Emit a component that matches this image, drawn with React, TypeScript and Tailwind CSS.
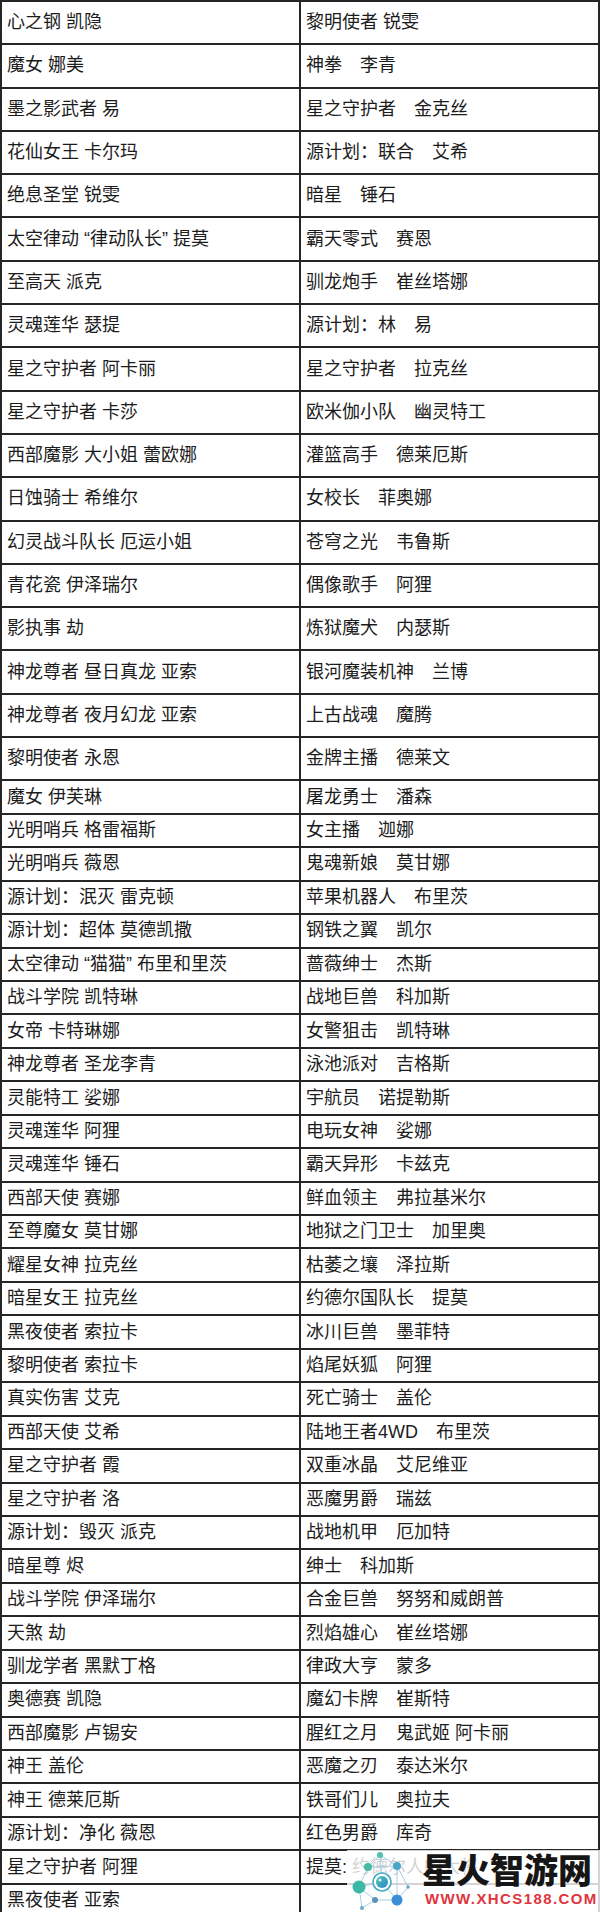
import { clsx } from "clsx";

// 左列 / 右列 皮肤名，顺序与截图一致
const rows: [string, string][] = [
  ["心之钢 凯隐", "黎明使者 锐雯"],
  ["魔女 娜美", "神拳　李青"],
  ["墨之影武者 易", "星之守护者　金克丝"],
  ["花仙女王 卡尔玛", "源计划：联合　艾希"],
  ["绝息圣堂 锐雯", "暗星　锤石"],
  ["太空律动 “律动队长” 提莫", "霸天零式　赛恩"],
  ["至高天 派克", "驯龙炮手　崔丝塔娜"],
  ["灵魂莲华 瑟提", "源计划：林　易"],
  ["星之守护者 阿卡丽", "星之守护者　拉克丝"],
  ["星之守护者 卡莎", "欧米伽小队　幽灵特工"],
  ["西部魔影 大小姐 蕾欧娜", "灌篮高手　德莱厄斯"],
  ["日蚀骑士 希维尔", "女校长　菲奥娜"],
  ["幻灵战斗队长 厄运小姐", "苍穹之光　韦鲁斯"],
  ["青花瓷 伊泽瑞尔", "偶像歌手　阿狸"],
  ["影执事 劫", "炼狱魔犬　内瑟斯"],
  ["神龙尊者 昼日真龙 亚索", "银河魔装机神　兰博"],
  ["神龙尊者 夜月幻龙 亚索", "上古战魂　魔腾"],
  ["黎明使者 永恩", "金牌主播　德莱文"],
  ["魔女 伊芙琳", "屠龙勇士　潘森"],
  ["光明哨兵 格雷福斯", "女主播　迦娜"],
  ["光明哨兵 薇恩", "鬼魂新娘　莫甘娜"],
  ["源计划：泯灭 雷克顿", "苹果机器人　布里茨"],
  ["源计划：超体 莫德凯撒", "钢铁之翼　凯尔"],
  ["太空律动 “猫猫” 布里和里茨", "蔷薇绅士　杰斯"],
  ["战斗学院 凯特琳", "战地巨兽　科加斯"],
  ["女帝 卡特琳娜", "女警狙击　凯特琳"],
  ["神龙尊者 圣龙李青", "泳池派对　吉格斯"],
  ["灵能特工 娑娜", "宇航员　诺提勒斯"],
  ["灵魂莲华 阿狸", "电玩女神　娑娜"],
  ["灵魂莲华 锤石", "霸天异形　卡兹克"],
  ["西部天使 赛娜", "鲜血领主　弗拉基米尔"],
  ["至尊魔女 莫甘娜", "地狱之门卫士　加里奥"],
  ["耀星女神 拉克丝", "枯萎之壤　泽拉斯"],
  ["暗星女王 拉克丝", "约德尔国队长　提莫"],
  ["黑夜使者 索拉卡", "冰川巨兽　墨菲特"],
  ["黎明使者 索拉卡", "焰尾妖狐　阿狸"],
  ["真实伤害 艾克", "死亡骑士　盖伦"],
  ["西部天使 艾希", "陆地王者4WD　布里茨"],
  ["星之守护者 霞", "双重冰晶　艾尼维亚"],
  ["星之守护者 洛", "恶魔男爵　瑞兹"],
  ["源计划：毁灭 派克", "战地机甲　厄加特"],
  ["暗星尊 烬", "绅士　科加斯"],
  ["战斗学院 伊泽瑞尔", "合金巨兽　努努和威朗普"],
  ["天煞 劫", "烈焰雄心　崔丝塔娜"],
  ["驯龙学者 黑默丁格", "律政大亨　蒙多"],
  ["奥德赛 凯隐", "魔幻卡牌　崔斯特"],
  ["西部魔影 卢锡安", "腥红之月　鬼武姬 阿卡丽"],
  ["神王 盖伦", "恶魔之刃　泰达米尔"],
  ["神王 德莱厄斯", "铁哥们儿　奥拉夫"],
  ["源计划：净化 薇恩", "红色男爵　库奇"],
  ["星之守护者 阿狸", "提莫: 约德尔人的大将"],
  ["黑夜使者 亚索", ""],
];

function WatermarkLogo() {
  const nodes = [
    { x: 9, y: 39, r: 6.5, c: "#3bb8a6" },
    { x: 30, y: 7, r: 3, c: "#4fc3b0" },
    { x: 18, y: 19, r: 4, c: "#48b9a3" },
    { x: 47, y: 18, r: 4, c: "#4aa6c9" },
    { x: 47, y: 52, r: 5.5, c: "#3b8fd6" },
    { x: 25, y: 52, r: 3, c: "#5c93b8" },
    { x: 58, y: 39, r: 1.8, c: "#6aa7cc" },
    { x: 12, y: 60, r: 2, c: "#6aa7cc" },
  ];
  const edges: [number, number][] = [
    [0, 2], [1, 2], [1, 3], [2, 3], [3, 4], [4, 5], [0, 5], [5, 7], [4, 6], [3, 6], [0, 7],
  ];
  return (
    <svg width="70" height="64" viewBox="0 0 70 64" className="shrink-0 -mt-[2px]">
      <defs>
        <linearGradient id="core" x1="0" y1="0" x2="1" y2="1">
          <stop offset="0" stopColor="#4cc7b4" />
          <stop offset="1" stopColor="#2f86d1" />
        </linearGradient>
      </defs>
      {edges.map(([a, b], i) => (
        <line
          key={i}
          x1={nodes[a].x}
          y1={nodes[a].y}
          x2={nodes[b].x}
          y2={nodes[b].y}
          stroke="#a9cfe6"
          strokeWidth="1"
        />
      ))}
      <line x1="32" y1="34" x2="9" y2="39" stroke="#a9cfe6" strokeWidth="1" />
      <line x1="32" y1="34" x2="47" y2="52" stroke="#a9cfe6" strokeWidth="1" />
      <line x1="32" y1="34" x2="30" y2="7" stroke="#a9cfe6" strokeWidth="1" />
      <circle cx="32" cy="34" r="9" fill="white" stroke="#3fa9c4" strokeWidth="1.6" />
      <circle cx="32" cy="34" r="6" fill="url(#core)" />
      <circle cx="30" cy="32" r="1.6" fill="white" opacity="0.8" />
      {nodes.map((n, i) => (
        <circle key={i} cx={n.x} cy={n.y} r={n.r} fill={n.c} />
      ))}
    </svg>
  );
}

export default function App() {
  return (
    <div className="relative h-[1912px] w-[600px] overflow-hidden bg-white font-['Liberation_Sans','Noto_Sans_CJK_SC',sans-serif] text-[18px] text-[#1c1c1c]">
      <div className="border-x-2 border-t-2 border-[#262626]">
        {rows.map(([left, right], i) => (
          <div
            key={i}
            className={clsx(
              "grid grid-cols-[299px_1fr] border-b-2 border-[#262626]",
              i < 18 ? "h-[43.3px]" : "h-[33.45px]"
            )}
          >
            <div className="flex items-center whitespace-nowrap border-r-2 border-[#262626] pl-[5px]">
              {left}
            </div>
            <div className="flex items-center whitespace-nowrap pl-[5px]">{right}</div>
          </div>
        ))}
      </div>

      {/* watermark over the bottom-right corner */}
      <div className="absolute bottom-0 right-0 flex h-[62px] w-[253px] items-start gap-[2px] bg-white/80 pl-[3px]">
        <WatermarkLogo />
        <div className="flex flex-col gap-[5px] pt-[2px]">
          <span className="whitespace-nowrap font-['Noto_Sans_CJK_SC',sans-serif] text-[34px] font-black leading-none text-[#161616]">
            星火智游网
          </span>
          <span className="whitespace-nowrap pl-[3px] font-['Liberation_Sans',sans-serif] text-[15px] font-bold leading-none tracking-[1.4px] text-[#e0353d]">
            WWW.XHCS188.COM
          </span>
        </div>
      </div>
    </div>
  );
}
